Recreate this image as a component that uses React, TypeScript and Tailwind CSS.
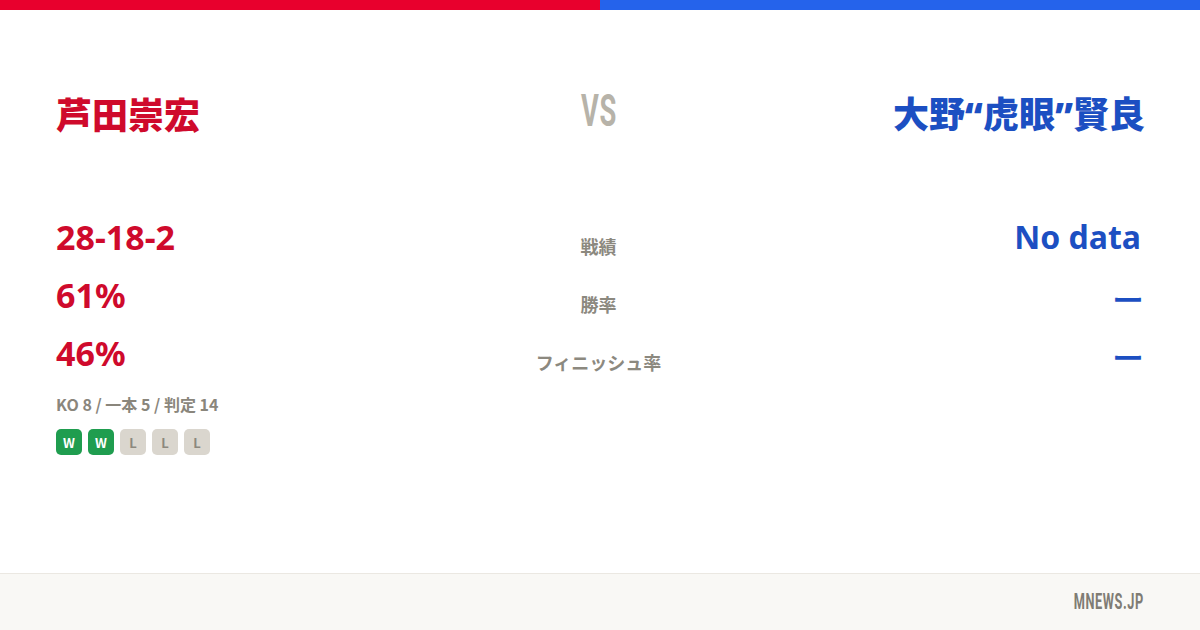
import React from "react";

const jp = "font-['Noto_Sans_CJK_JP',sans-serif]";
const latin = "font-['Noto_Sans','Noto_Sans_CJK_JP',sans-serif]";

function Badge({ r }: { r: "W" | "L" }) {
  return (
    <div
      className={
        "w-[26px] h-[26px] rounded-[5px] flex items-center justify-center text-[13px] font-bold leading-none " +
        (r === "W" ? "bg-[#1f9d4f] text-white" : "bg-[#dad6ce] text-[#8c887e]")
      }
    >
      {r}
    </div>
  );
}

export default function App() {
  const rows = [
    { l: "28-18-2", label: "戦績", r: "No data", dash: false },
    { l: "61%", label: "勝率", r: "ー", dash: true },
    { l: "46%", label: "フィニッシュ率", r: "ー", dash: true },
  ];
  return (
    <div className={"w-[1200px] h-[630px] flex flex-col bg-white overflow-hidden " + jp}>
      <div className="flex h-[10px]">
        <div className="flex-1 bg-[#e8002d]" />
        <div className="flex-1 bg-[#2563eb]" />
      </div>
      <div className="flex-1 pl-[56px] pr-[59px]">
        <div className="grid grid-cols-[1fr_auto_1fr] items-center mt-[75px] h-[56px]">
          <div className="text-[36px] font-black leading-none text-[#cf0a2c]">芦田崇宏</div>
          <div className="text-[44px] font-bold leading-none text-[#b7b3a9] font-['Roboto',sans-serif] scale-x-[0.62] tracking-[1px] -mt-[4px]">
            VS
          </div>
          <div className="text-[36px] font-black leading-none text-[#1c4fc2] text-right -mr-[4px]">
            大野<span className="font-['Noto_Sans',sans-serif]">“</span>虎眼<span className="font-['Noto_Sans',sans-serif]">”</span>賢良
          </div>
        </div>
        <div className="mt-[67px]">
          {rows.map((row) => (
            <div key={row.label} className="grid grid-cols-[1fr_auto_1fr] items-start h-[58px]">
              <div className={"text-[34px] font-bold leading-[58px] text-[#cf0a2c] " + latin}>{row.l}</div>
              <div className="mt-[26px] text-[18px] font-bold leading-[24px] text-[#8c897f] text-center">{row.label}</div>
              {row.dash ? (
                <div className="text-[32px] font-medium leading-[58px] text-[#1c4fc2] text-right -mr-[3px] mt-[3px]">{row.r}</div>
              ) : (
                <div className={"text-[32px] font-bold leading-[58px] text-[#1c4fc2] text-right " + latin}>{row.r}</div>
              )}
            </div>
          ))}
        </div>
        <div className="mt-[10px] text-[16px] font-bold leading-[24px] text-[#8a867c]">KO 8 / 一本 5 / 判定 14</div>
        <div className="mt-[13px] flex gap-[6px]">
          <Badge r="W" />
          <Badge r="W" />
          <Badge r="L" />
          <Badge r="L" />
          <Badge r="L" />
        </div>
      </div>
      <div className="h-[57px] border-t border-[#ebe8e2] bg-[#f9f8f5] flex items-center justify-end pr-[56px]">
        <span className="inline-block text-[22px] font-bold leading-none text-[#7f7c74] font-['Roboto',sans-serif] scale-x-[0.58] origin-right tracking-[1px]">
          MNEWS.JP
        </span>
      </div>
    </div>
  );
}
